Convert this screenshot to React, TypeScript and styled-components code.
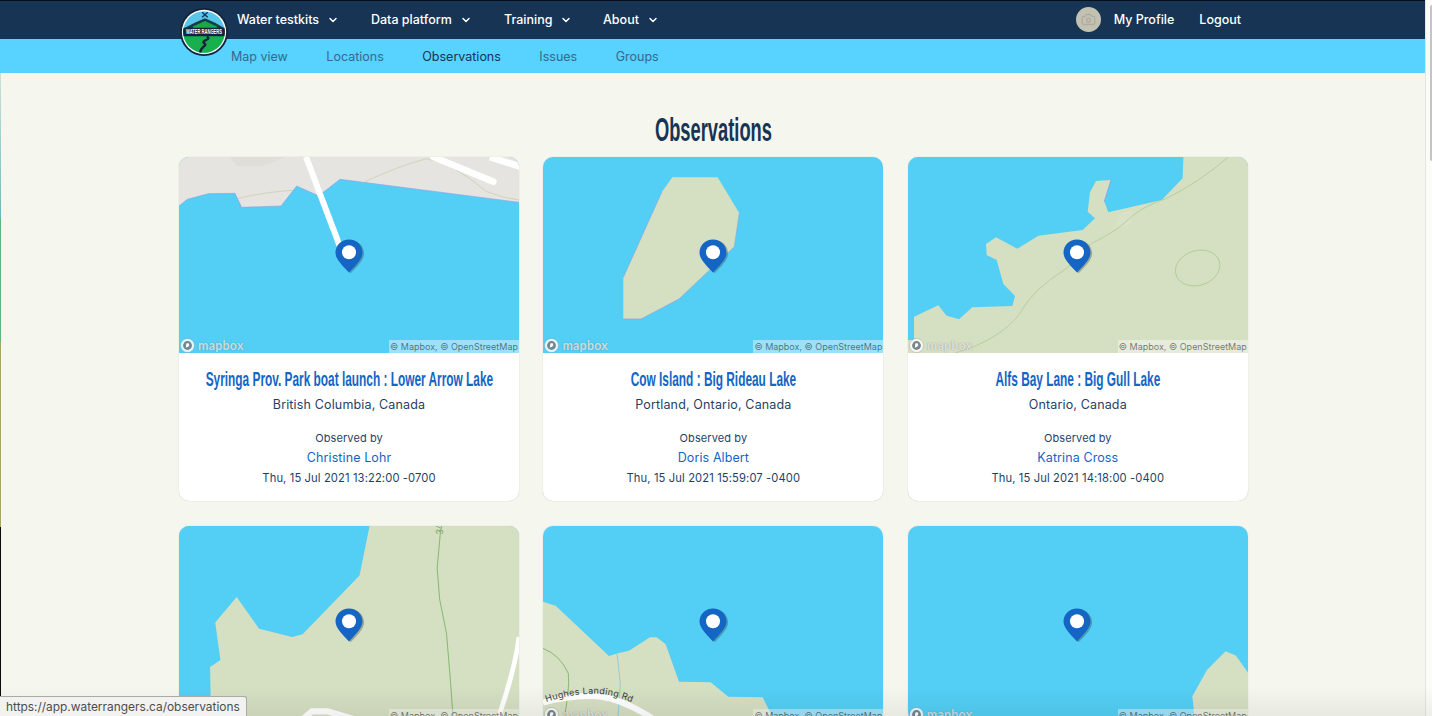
import React from "react";
import styled, { createGlobalStyle } from "styled-components";
import { ChevronDown, Camera } from "lucide-react";

const Global = createGlobalStyle`
  html, body { margin: 0; padding: 0; height: 716px; overflow: hidden; background: #f5f6ee; }
  * { box-sizing: border-box; }
  #root { height: 716px; }
`;

const Shell = styled.div`
  position: relative;
  display: flex;
  width: 1432px;
  height: 716px;
  overflow: hidden;
  font-family: Inter, "Liberation Sans", sans-serif;
  color: #173454;
`;
const Content = styled.div`
  flex: 1;
  min-width: 0;
  display: flex;
  flex-direction: column;
`;
const ScrollTrack = styled.div`
  width: 7px;
  padding: 5px 0 0 4px;
  background: #fbfbf8;
  border-left: 1px solid #e4e4e0;
`;
const ScrollThumb = styled.div`
  height: 156px;
  background: #c4c4c4;
  border-radius: 3px 0 0 3px;
`;
const TopBar = styled.header`
  flex: none;
  height: 39px;
  background: #173454;
  border-top: 1px solid #05101c;
  padding: 0 184px 2px 237px;
  display: flex;
  align-items: center;
  justify-content: space-between;
`;
const MenuGroup = styled.nav`
  display: flex;
  align-items: center;
`;
const Menu = styled.span<{ $w: number }>`
  width: ${(p) => p.$w}px;
  display: flex;
  align-items: center;
  gap: 8px;
  font-size: 12.5px;
  font-weight: 500;
  color: #fff;
  svg { margin-top: 2px; }
`;
const ProfileGroup = styled.div`
  display: flex;
  align-items: center;
  font-size: 12.5px;
  font-weight: 500;
  color: #fff;
`;
const Avatar = styled.span`
  width: 25px;
  height: 25px;
  border-radius: 50%;
  background: #c3c2b2;
  color: #aeada0;
  display: flex;
  align-items: center;
  justify-content: center;
  margin-right: 13px;
`;
const Logout = styled.span`
  margin-left: 25px;
`;
const SubBar = styled.nav`
  flex: none;
  height: 34px;
  background: #58d2ff;
  padding: 0 0 0 231px;
  display: flex;
  align-items: center;
  gap: 38.5px;
`;
const SubLink = styled.span<{ $active?: boolean }>`
  font-size: 12.5px;
  margin-top: 1px;
  color: ${(p) => (p.$active ? "#173454" : "#37688d")};
`;
const LogoWrap = styled.div`
  position: absolute;
  left: 180px;
  top: 8px;
  width: 48px;
  height: 48px;
`;
const Main = styled.main`
  flex: 1;
  width: 1069px;
  margin-left: 179px;
`;
const Heading = styled.h1`
  margin: 0;
  height: 84px;
  padding-top: 37px;
  display: flex;
  justify-content: center;
  line-height: 40px;
  font-family: "Liberation Sans", sans-serif;
  font-size: 33px;
  font-weight: 700;
  color: #173454;
  span { display: inline-block; white-space: nowrap; transform: scaleX(0.555); }
`;
const Grid = styled.section`
  display: grid;
  grid-template-columns: repeat(3, 340px);
  column-gap: 24.4px;
  row-gap: 25px;
`;
const Card = styled.article`
  background: #fff;
  border-radius: 10px;
  box-shadow: 0 0 1px rgba(60, 60, 40, 0.35);
  overflow: hidden;
  text-align: center;
`;
const MapBox = styled.div`
  position: relative;
  height: 196px;
  background: #53cef5;
  svg.base { display: block; width: 100%; height: 100%; }
`;
const Pin = styled.svg`
  position: absolute;
  left: 50%;
  top: 82px;
  margin-left: -14.5px;
  width: 34px;
  height: 36px;
`;
const MapboxMark = styled.div`
  position: absolute;
  left: 1px;
  bottom: 0px;
  height: 16px;
  display: flex;
  align-items: center;
  gap: 3px;
  font-family: Lato, "Open Sans", sans-serif;
  font-size: 12.5px;
  font-weight: 700;
  letter-spacing: 0.2px;
  color: rgba(255, 255, 255, 0.72);
  text-shadow: 0 0 1px rgba(60, 60, 60, 0.55);
`;
const Attribution = styled.div`
  position: absolute;
  right: 0;
  bottom: 0;
  height: 13px;
  padding: 0 1px;
  background: rgba(255, 255, 255, 0.42);
  font-family: Inter, "Liberation Sans", sans-serif;
  font-size: 9px;
  line-height: 14px;
  color: rgba(0, 0, 0, 0.52);
  white-space: nowrap;
`;
const Body = styled.div`
  padding: 13px 8px 13px;
`;
const Title = styled.h2`
  margin: 0;
  height: 26px;
  display: flex;
  justify-content: center;
  line-height: 26px;
  font-family: "Liberation Sans", sans-serif;
  font-size: 21px;
  font-weight: 700;
  white-space: nowrap;
  color: #1565c5;
  span { display: inline-block; flex: none; transform: scaleX(0.565); }
`;
const Region = styled.p`
  margin: 3px 0 14px;
  height: 20px;
  font-size: 12.5px;
  line-height: 20px;
  letter-spacing: 0.15px;
  color: #1f3f66;
`;
const ObservedBy = styled.p`
  margin: 0;
  height: 19px;
  font-size: 11px;
  line-height: 18px;
  letter-spacing: 0.1px;
  color: #1f3f66;
`;
const Person = styled.p`
  margin: 0;
  height: 20px;
  font-size: 12.5px;
  line-height: 20px;
  letter-spacing: 0.1px;
  color: #1565c5;
`;
const DateLine = styled.p`
  margin: 0;
  height: 20px;
  font-size: 11.2px;
  line-height: 20px;
  letter-spacing: 0.12px;
  color: #1f3f66;
`;
const StatusTip = styled.div`
  position: absolute;
  left: 0;
  bottom: 0;
  width: 247px;
  height: 20px;
  padding: 0 0 0 6px;
  background: #f2f2f0;
  border: 1px solid #a9a9a6;
  border-left: none;
  border-bottom: none;
  border-radius: 0 3px 0 0;
  font-size: 11.9px;
  line-height: 19px;
  color: #4d4d4d;
  white-space: nowrap;
  z-index: 3;
`;
const BottomFade = styled.div`
  position: absolute;
  left: 0;
  right: 0;
  bottom: 0;
  height: 30px;
  background: linear-gradient(to bottom, rgba(0, 0, 0, 0), rgba(0, 0, 0, 0.055));
  pointer-events: none;
  z-index: 2;
`;
const EdgeStrip = styled.div`
  position: absolute;
  left: 0;
  top: 73px;
  bottom: 0;
  width: 1px;
  background: linear-gradient(
    to bottom,
    #cfe3d8 0,
    #6fb5bd 146px,
    #5eb67c 146px,
    #5eb67c 269px,
    #a7a75f 269px,
    #a7a75f 454px,
    #0a0a0a 454px
  );
  z-index: 1;
`;

const LAND = "#d5dfc2";
const GREY = "#e6e4e0";
const WATER = "#53cef5";
const SHORE = "#8aa6e6";

const MapOne = () => (
  <svg className="base" viewBox="27 21 1020 588" preserveAspectRatio="none">
    <rect x="27" y="21" width="1020" height="588" fill={GREY} />
    <path d="M180 21 L200 48 L280 48 L345 21 Z" fill="#e0ded8" />
    <path d="M205 145 Q300 122 395 120 M585 95 Q680 50 770 26 Q850 40 950 125 Q1000 145 1047 150" fill="none" stroke="#c5d2af" strokeWidth="2.5" />
    <path d="M790 21 L970 95" stroke="#fff" strokeWidth="20" strokeLinecap="round" />
    <path d="M960 21 L1050 50" stroke="#fff" strokeWidth="20" />
    <path d="M27 168 L52 148 L115 131 L195 130 L215 172 L333 168 L380 108 L440 135 L462 125 L510 88 L1047 157 L1047 609 L27 609 Z" fill={WATER} />
    <path d="M27 168 L52 148 L115 131 L195 130 L215 172 L333 168 L380 108 L440 135 L462 125 L510 88 L1047 157" fill="none" stroke={SHORE} strokeWidth="2" />
    <path d="M408 21 L510 290" stroke="#fff" strokeWidth="18" />
  </svg>
);
const MapTwo = () => (
  <svg className="base" viewBox="24 21 1020 588" preserveAspectRatio="none">
    <path d="M265 382 L380 127 L412 82 L548 82 L613 190 L598 290 L432 447 L318 507 L265 507 Z" fill={LAND} />
    <path d="M613 190 L598 290 L432 447 L318 507 L265 507 M265 382 L380 127" fill="none" stroke={SHORE} strokeWidth="2" />
  </svg>
);
const MapThree = () => (
  <svg className="base" viewBox="24 21 1020 588" preserveAspectRatio="none">
    <rect x="24" y="21" width="1020" height="588" fill={LAND} />
    <path d="M24 21 L850 21 L848 85 L785 150 L625 187 L613 155 L633 90 L588 93 L570 127 L563 185 L585 205 L548 240 L415 257 L352 296 L288 262 L258 282 L260 315 L290 330 L310 402 L345 438 L337 468 L217 472 L177 508 L140 497 L115 466 L42 500 L42 570 L24 570 Z" fill={WATER} />
    <path d="M633 90 L613 155" stroke={SHORE} strokeWidth="3" fill="none" />
    <path d="M640 235 L665 190 L700 180 L690 225 Z" fill="#d9e2c8" />
    <path d="M165 609 Q300 570 360 490 Q395 420 500 355 L575 280 Q650 245 700 195 Q740 165 800 145 Q900 95 985 21" fill="none" stroke="#aecb94" strokeWidth="2.5" />
    <ellipse cx="893" cy="354" rx="68" ry="52" transform="rotate(-18 893 354)" fill="none" stroke="#aecb94" strokeWidth="2.5" />
  </svg>
);
const MapFour = () => (
  <svg className="base" viewBox="520 18 985 569" preserveAspectRatio="none">
    <rect x="520" y="18" width="985" height="569" fill={LAND} />
    <path d="M520 18 L1072 18 L1043 162 L878 332 L848 340 L752 316 L687 224 L625 298 L640 407 L610 427 L613 587 L520 587 Z" fill={WATER} />
    <path d="M1278 28 L1268 140 L1275 230 L1295 330 L1305 450 L1315 587" fill="none" stroke="#86b874" strokeWidth="3" />
    <text x="1266" y="38" fontSize="24" fill="#6aa35c" fontFamily="Inter, sans-serif" transform="rotate(-90 1278 30)">34</text>
    <path d="M865 590 L905 556 L950 556 L1065 590" fill="none" stroke="#fff" strokeWidth="18" />
    <path d="M1505 340 Q1495 430 1440 590" fill="none" stroke="#fff" strokeWidth="14" />
  </svg>
);
const MapFive = () => (
  <svg className="base" viewBox="24 18 1020 588" preserveAspectRatio="none">
    <path d="M24 245 L62 257 L222 408 L248 400 L282 392 L345 352 L365 352 L392 373 L432 485 L527 487 L580 530 L683 532 L720 606 L24 606 Z" fill={LAND} />
    <path d="M24 385 Q75 405 100 460 Q105 510 85 606" fill="none" stroke="#86b874" strokeWidth="3" />
    <path d="M246 400 L256 490 L248 606" fill="none" stroke="#86c6dd" strokeWidth="2.5" />
    <path d="M24 548 Q120 522 200 530 Q270 540 370 606" fill="none" stroke="#fff" strokeWidth="18" />
    <path id="hughes-label" d="M34 546 Q120 518 200 522 Q260 530 320 560" fill="none" />
    <text fontSize="27" fill="#3a3a3a" fontFamily="Inter, sans-serif" letterSpacing="0.8">
      <textPath href="#hughes-label">Hughes Landing Rd</textPath>
    </text>
  </svg>
);
const MapSix = () => (
  <svg className="base" viewBox="24 18 1002 578" preserveAspectRatio="none">
    <path d="M862 520 L905 443 L960 387 L990 400 L1026 450 L1026 596 L870 596 Z" fill={LAND} />
  </svg>
);

const PIN_PATH = "M14 0.5 C6.4 0.5 0.5 6.4 0.5 13.6 C0.5 20.5 8 27 14 33.5 C20 27 27.5 20.5 27.5 13.6 C27.5 6.4 21.6 0.5 14 0.5 Z";

const MapPin = () => (
  <Pin viewBox="0 0 34 36">
    <path d={PIN_PATH} transform="translate(1.6 0.8)" fill="rgba(60,70,70,0.36)" />
    <path d={PIN_PATH} fill="#1565c5" />
    <circle cx="14" cy="13.3" r="7" fill="#fff" />
  </Pin>
);

const MapboxLogo = () => (
  <MapboxMark>
    <svg width="15" height="15" viewBox="0 0 15 15">
      <circle cx="7.5" cy="7.5" r="7" fill="rgba(255,255,255,0.82)" stroke="rgba(70,70,70,0.35)" strokeWidth="0.6" />
      <circle cx="7.5" cy="7.5" r="4.4" fill="rgba(70,90,100,0.72)" />
      <path d="M5.8 10.2 L6.3 5.6 Q7.6 4.7 9 5.6 Q10 7.6 8 9 L6.8 9 Z" fill="#fff" />
    </svg>
    mapbox
  </MapboxMark>
);

type Observation = {
  id: string;
  map: () => React.ReactElement;
  title?: string;
  region?: string;
  person?: string;
  date?: string;
};

const observations: Observation[] = [
  { id: "syringa", map: MapOne, title: "Syringa Prov. Park boat launch : Lower Arrow Lake", region: "British Columbia, Canada", person: "Christine Lohr", date: "Thu, 15 Jul 2021 13:22:00 -0700" },
  { id: "cow", map: MapTwo, title: "Cow Island : Big Rideau Lake", region: "Portland, Ontario, Canada", person: "Doris Albert", date: "Thu, 15 Jul 2021 15:59:07 -0400" },
  { id: "alfs", map: MapThree, title: "Alfs Bay Lane : Big Gull Lake", region: "Ontario, Canada", person: "Katrina Cross", date: "Thu, 15 Jul 2021 14:18:00 -0400" },
  { id: "row2a", map: MapFour },
  { id: "row2b", map: MapFive },
  { id: "row2c", map: MapSix },
];

const Logo = () => (
  <LogoWrap>
    <svg width="48" height="48" viewBox="0 0 52 52">
      <defs>
        <clipPath id="logo-clip"><circle cx="26" cy="26" r="22.5" /></clipPath>
      </defs>
      <circle cx="26" cy="26" r="26" fill="#12233b" />
      <circle cx="26" cy="26" r="24" fill="#fff" />
      <g clipPath="url(#logo-clip)">
        <rect x="0" y="0" width="52" height="52" fill="#58c6e8" />
        <path d="M2 23 L16 16 L27 11 L38 16 L50 23 L50 30 L2 30 Z" fill="#173a4a" />
        <path d="M14 20 L27 14 L40 20 L40 22 L14 22 Z" fill="#17a84a" />
        <path d="M0 29 H52 V52 H0 Z" fill="#17b04d" />
        <path d="M3 21.5 L49 21.5 L49 30.5 L3 30.5 Z" fill="#13243c" />
        <path d="M29 31 C35 34 23 35 26 38 C31 41 21 42 22 49" fill="none" stroke="#13243c" strokeWidth="2.6" />
        <path d="M24 4.5 L30 10 M30 4.5 L24 10" stroke="#173454" strokeWidth="1.5" />
      </g>
      <text x="26" y="28.6" textAnchor="middle" fontSize="7" fontWeight="700" fill="#fff" fontFamily="'Liberation Sans', sans-serif" textLength="39" lengthAdjust="spacingAndGlyphs">WATER RANGERS</text>
    </svg>
  </LogoWrap>
);

const menus = [
  { label: "Water testkits", w: 134 },
  { label: "Data platform", w: 133 },
  { label: "Training", w: 99 },
  { label: "About", w: 70 },
];
const subs = ["Map view", "Locations", "Observations", "Issues", "Groups"];

export default function App() {
  return (
    <Shell>
      <Global />
      <Content>
        <TopBar>
          <MenuGroup>
            {menus.map((m) => (
              <Menu key={m.label} $w={m.w}>
                {m.label}
                <ChevronDown size={12} strokeWidth={3} />
              </Menu>
            ))}
          </MenuGroup>
          <ProfileGroup>
            <Avatar><Camera size={15} strokeWidth={2.2} /></Avatar>
            My Profile
            <Logout>Logout</Logout>
          </ProfileGroup>
        </TopBar>
        <SubBar>
          {subs.map((s) => (
            <SubLink key={s} $active={s === "Observations"}>{s}</SubLink>
          ))}
        </SubBar>
        <Main>
          <Heading><span>Observations</span></Heading>
          <Grid>
            {observations.map((o) => {
              const MapArt = o.map;
              return (
                <Card key={o.id}>
                  <MapBox>
                    <MapArt />
                    <MapPin />
                    <MapboxLogo />
                    <Attribution>© Mapbox, © OpenStreetMap</Attribution>
                  </MapBox>
                  {o.title && (
                    <Body>
                      <Title><span>{o.title}</span></Title>
                      <Region>{o.region}</Region>
                      <ObservedBy>Observed by</ObservedBy>
                      <Person>{o.person}</Person>
                      <DateLine>{o.date}</DateLine>
                    </Body>
                  )}
                </Card>
              );
            })}
          </Grid>
        </Main>
      </Content>
      <ScrollTrack><ScrollThumb /></ScrollTrack>
      <Logo />
      <EdgeStrip />
      <BottomFade />
      <StatusTip>https://app.waterrangers.ca/observations</StatusTip>
    </Shell>
  );
}
